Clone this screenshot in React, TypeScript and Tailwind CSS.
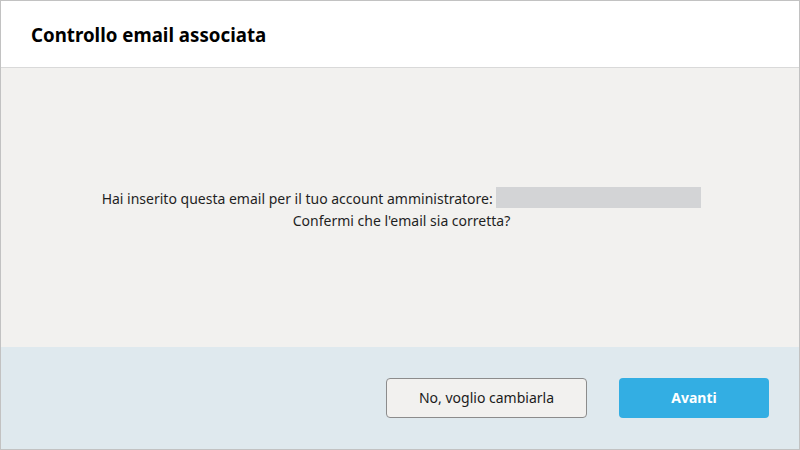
export default function App() {
  return (
    <div
      className="flex h-[450px] w-[800px] flex-col border border-[#c2c2c2] bg-white text-[#1b1b1b]"
      style={{ fontFamily: '"Noto Sans", "Open Sans", Arial, sans-serif' }}
    >
      <header className="flex h-[67px] shrink-0 items-center border-b border-[#d9d9d9] bg-white px-[30px] pt-[2px]">
        <h1 className="text-[18.7px] font-bold text-black">Controllo email associata</h1>
      </header>

      <main className="flex flex-1 flex-col items-center justify-center bg-[#f2f1ef] pl-[3px] text-center text-[14px] leading-[22px] text-[#1f1f1f]">
        <p>
          Hai inserito questa email per il tuo account amministratore:{" "}
          <span className="inline-block h-[21px] w-[205px] translate-y-[4px] bg-[#d3d4d6] align-baseline" />
        </p>
        <p>Confermi che l'email sia corretta?</p>
      </main>

      <footer className="flex h-[102px] shrink-0 items-center justify-end gap-[32px] bg-[#dfe9ee] pr-[30px] pb-[1px]">
        <button className="h-[40px] w-[201px] rounded-[4px] border border-[#8c8c8c] bg-[#f2f1ef] text-[14px] text-[#1b1b1b]">
          No, voglio cambiarla
        </button>
        <button className="h-[40px] w-[150px] rounded-[4px] bg-[#33aee3] text-[14px] font-bold text-white">
          Avanti
        </button>
      </footer>
    </div>
  );
}
